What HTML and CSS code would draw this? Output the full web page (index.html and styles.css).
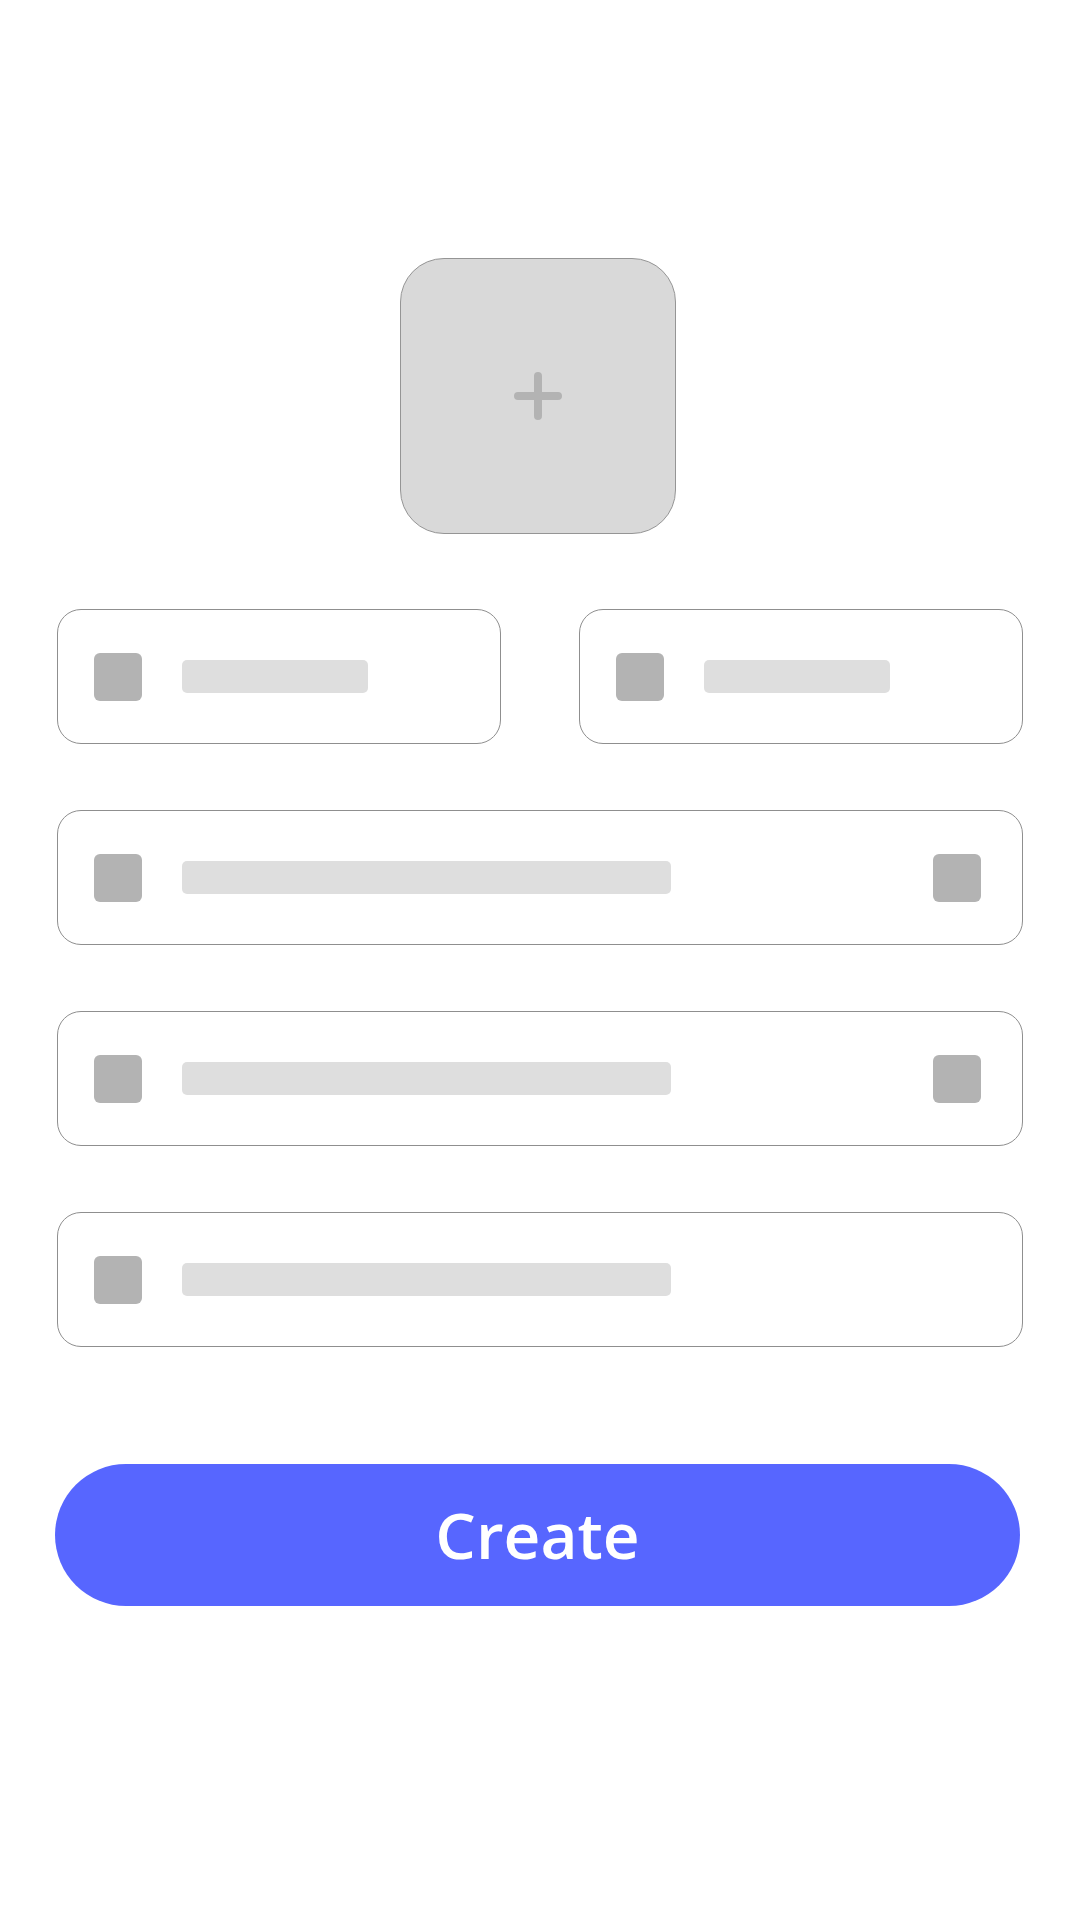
FILE: index.html
```html
<!DOCTYPE html>
<html lang="en">
<head>
<meta charset="utf-8">
<title>Create</title>
<link rel="stylesheet" href="styles.css">
</head>
<body>
<main class="page">
  <button class="upload" type="button" aria-label="Add image">
    <svg class="plus" width="48" height="48" viewBox="0 0 48 48" aria-hidden="true">
      <path d="M24 4 V44 M4 24 H44" stroke="#b3b3b3" stroke-width="8" stroke-linecap="round" fill="none"/>
    </svg>
  </button>

  <section class="form">
    <div class="row-split">
      <div class="card">
        <span class="icon"></span>
        <span class="bar short"></span>
      </div>
      <div class="card">
        <span class="icon"></span>
        <span class="bar short"></span>
      </div>
    </div>
    <div class="card">
      <span class="icon"></span>
      <span class="bar long"></span>
      <span class="icon end"></span>
    </div>
    <div class="card">
      <span class="icon"></span>
      <span class="bar long"></span>
      <span class="icon end"></span>
    </div>
    <div class="card">
      <span class="icon"></span>
      <span class="bar long"></span>
    </div>
  </section>

  <button class="create" type="button">Create</button>
</main>
</body>
</html>
```

FILE: styles.css
```css
html, body {
  margin: 0;
  padding: 0;
  background: #ffffff;
}

body {
  width: 1080px;
  height: 1920px;
  font-family: "Open Sans", "Noto Sans", "DejaVu Sans", sans-serif;
}

.page {
  display: flex;
  flex-direction: column;
  align-items: flex-start;
  padding-top: 258px;
}

.upload {
  box-sizing: border-box;
  width: 276px;
  height: 276px;
  margin: 0 0 0 400px;
  padding: 0;
  background: #d9d9d9;
  border: 1.5px solid #959595;
  border-radius: 44px;
  display: flex;
  align-items: center;
  justify-content: center;
  cursor: pointer;
}

.plus {
  display: block;
  width: 48px;
  height: 48px;
}

.form {
  box-sizing: border-box;
  width: 1080px;
  margin-top: 75px;
  padding: 0 57px;
  display: flex;
  flex-direction: column;
  gap: 66px;
}

.row-split {
  display: grid;
  grid-template-columns: 1fr 1fr;
  gap: 78px;
}

.card {
  box-sizing: border-box;
  height: 135px;
  border: 1.5px solid #8f8f8f;
  border-radius: 24px;
  background: #ffffff;
  display: flex;
  align-items: center;
  padding: 0 41.5px 0 36px;
}

.icon {
  flex: none;
  width: 48px;
  height: 48px;
  border-radius: 6px;
  background: #b3b3b3;
}

.icon.end {
  margin-left: auto;
}

.bar {
  flex: none;
  height: 33px;
  margin-left: 40px;
  border-radius: 5px;
  background: #dedede;
}

.bar.short {
  width: 186px;
}

.bar.long {
  width: 489px;
}

.create {
  box-sizing: border-box;
  width: 965px;
  height: 142px;
  margin: 117px 0 0 55px;
  padding: 0;
  border: none;
  border-radius: 71px;
  background: #5766ff;
  color: #ffffff;
  font-family: "Open Sans", "Noto Sans", "DejaVu Sans", sans-serif;
  font-weight: 600;
  font-size: 64px;
  line-height: 1;
  cursor: pointer;
}
```
